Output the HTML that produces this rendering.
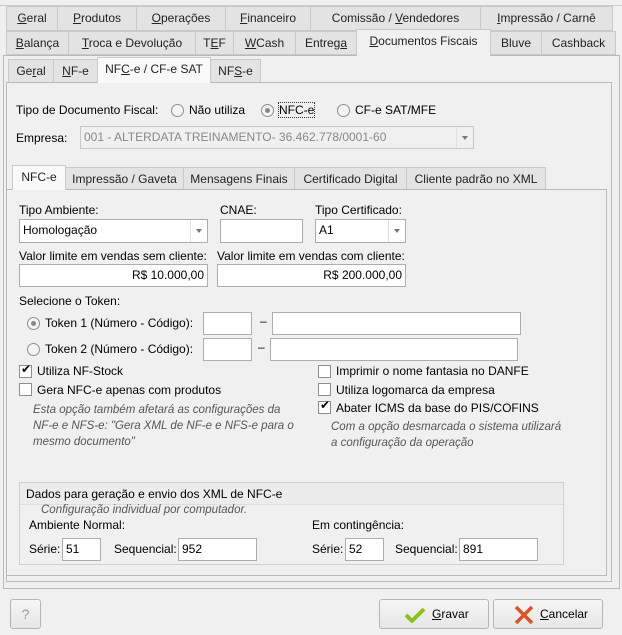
<!DOCTYPE html>
<html><head><meta charset="utf-8"><style>
*{box-sizing:border-box;margin:0;padding:0}
body{width:622px;height:635px;background:#f0f0f0;font-family:"Liberation Sans",sans-serif;font-size:12px;color:#000;position:relative;overflow:hidden}
.a{position:absolute;white-space:nowrap}
.tab{position:absolute;background:#e3e3e3;border:1px solid #c9c9c9;text-align:center;line-height:22px;color:#222}
.sel{background:#f9f9f9;border-bottom:none;z-index:3}
.box{position:absolute;border:1px solid #b9b9b9}
.in{position:absolute;background:#fff;border:1px solid #adadad;line-height:20px;padding:0 3px}
.dd{position:absolute;right:0;top:0;bottom:0;width:17px;border-left:1px solid #e0e0e0}
.dd:after{content:"";position:absolute;left:5px;top:9px;border:3px solid transparent;border-top:4px solid #777}
.rad{position:absolute;width:13px;height:13px;border:1px solid #8e8e8e;border-radius:50%;background:#f4f4f4}
.rad.on:after{content:"";position:absolute;left:3px;top:3px;width:5px;height:5px;border-radius:50%;background:#888}
.chk{position:absolute;width:13px;height:13px;border:1px solid #8e8e8e;background:#fff}
.it{font-style:italic;color:#555}
u{text-decoration:underline}
.btn{position:absolute;border:1px solid #b5b5b5;border-radius:3px;background:linear-gradient(#f6f6f6,#e6e6e6)}
</style></head><body>
<div class="a" style="left:0;top:0;width:622px;height:6px;border-bottom:1px solid #ccc"></div>
<!-- row1 -->
<div class="tab" style="left:6px;top:6px;width:52px;height:25px"><u>G</u>eral</div>
<div class="tab" style="left:57px;top:6px;width:80px;height:25px"><u>P</u>rodutos</div>
<div class="tab" style="left:136px;top:6px;width:90px;height:25px"><u>O</u>perações</div>
<div class="tab" style="left:225px;top:6px;width:86px;height:25px"><u>F</u>inanceiro</div>
<div class="tab" style="left:310px;top:6px;width:171px;height:25px">Comissão / <u>V</u>endedores</div>
<div class="tab" style="left:480px;top:6px;width:133px;height:25px"><u>I</u>mpressão / Carnê</div>
<!-- row2 -->
<div class="tab" style="left:6px;top:31px;width:63px;height:24px"><u>B</u>alança</div>
<div class="tab" style="left:68px;top:31px;width:128px;height:24px"><u>T</u>roca e Devolução</div>
<div class="tab" style="left:195px;top:31px;width:39px;height:24px">T<u>E</u>F</div>
<div class="tab" style="left:233px;top:31px;width:63px;height:24px"><u>W</u>Cash</div>
<div class="tab" style="left:295px;top:31px;width:62px;height:24px">Entreg<u>a</u></div>
<div class="tab sel" style="left:356px;top:29px;width:135px;height:27px;background:#f0f0f0"><u>D</u>ocumentos Fiscais</div>
<div class="tab" style="left:490px;top:31px;width:52px;height:24px">Bluve</div>
<div class="tab" style="left:541px;top:31px;width:75px;height:24px">Cashback</div>
<div class="box" style="left:3px;top:55px;width:617px;height:534px"></div>
<!-- subtabs -->
<div class="tab" style="left:8px;top:59px;width:46px;height:24px">Ge<u>r</u>al</div>
<div class="tab" style="left:53px;top:59px;width:45px;height:24px"><u>N</u>F-e</div>
<div class="tab sel" style="left:97px;top:57px;width:114px;height:26px">NF<u>C</u>-e / CF-e SAT</div>
<div class="tab" style="left:210px;top:59px;width:51px;height:24px">NF<u>S</u>-e</div>
<div class="box" style="left:6px;top:82px;width:606px;height:500px"></div>
<div class="a" style="left:16px;top:103px">Tipo de Documento Fiscal:</div>
<div class="rad" style="left:171px;top:104px"></div><div class="a" style="left:189px;top:103px">Não utiliza</div>
<div class="rad on" style="left:261px;top:104px"></div><div class="a" style="left:279px;top:103px;outline:1px dotted #333">NFC-e</div>
<div class="rad" style="left:337px;top:104px"></div><div class="a" style="left:355px;top:103px">CF-e SAT/MFE</div>
<div class="a" style="left:16px;top:131px">Empresa:</div>
<div class="in" style="left:80px;top:126px;width:394px;height:23px;background:#f0f0f0;border-color:#c8c8c8;color:#888;line-height:21px">001 - ALTERDATA TREINAMENTO- 36.462.778/0001-60<div class="dd"></div></div>
<!-- inner tabs -->
<div class="tab sel" style="left:12px;top:165px;width:54px;height:25px">NFC-e</div>
<div class="tab" style="left:65px;top:167px;width:119px;height:23px">Impressão / Gaveta</div>
<div class="tab" style="left:183px;top:167px;width:112px;height:23px">Mensagens Finais</div>
<div class="tab" style="left:294px;top:167px;width:113px;height:23px">Certificado Digital</div>
<div class="tab" style="left:406px;top:167px;width:140px;height:23px">Cliente padrão no XML</div>
<div class="box" style="left:6px;top:189px;width:601px;height:387px"></div>
<div class="a" style="left:19px;top:203px">Tipo Ambiente:</div>
<div class="in" style="left:19px;top:219px;width:189px;height:24px">Homologação<div class="dd"></div></div>
<div class="a" style="left:220px;top:203px">CNAE:</div>
<div class="in" style="left:220px;top:219px;width:83px;height:24px"></div>
<div class="a" style="left:315px;top:203px">Tipo Certificado:</div>
<div class="in" style="left:315px;top:219px;width:91px;height:24px">A1<div class="dd"></div></div>
<div class="a" style="left:19px;top:249px">Valor limite em vendas sem cliente:</div>
<div class="in" style="left:19px;top:264px;width:189px;height:23px;text-align:right">R$ 10.000,00</div>
<div class="a" style="left:217px;top:249px">Valor limite em vendas com cliente:</div>
<div class="in" style="left:217px;top:264px;width:189px;height:23px;text-align:right">R$ 200.000,00</div>
<div class="a" style="left:19px;top:294px">Selecione o Token:</div>
<div class="rad on" style="left:27px;top:317px"></div><div class="a" style="left:45px;top:316px">Token 1 (Número - Código):</div>
<div class="in" style="left:203px;top:312px;width:49px;height:23px"></div><div class="a" style="left:260px;top:314px">–</div>
<div class="in" style="left:272px;top:312px;width:249px;height:23px"></div>
<div class="rad" style="left:27px;top:343px"></div><div class="a" style="left:45px;top:342px">Token 2 (Número - Código):</div>
<div class="in" style="left:203px;top:338px;width:49px;height:23px"></div><div class="a" style="left:258px;top:340px">–</div>
<div class="in" style="left:270px;top:338px;width:248px;height:23px"></div>
<div class="chk" style="left:19px;top:365px"></div><div class="a" style="left:21px;top:362px;font-size:12px">✔</div><div class="a" style="left:37px;top:364px">Utiliza NF-Stock</div>
<div class="chk" style="left:19px;top:383px"></div><div class="a" style="left:37px;top:383px">Gera NFC-e apenas com produtos</div>
<div class="a it" style="left:33px;top:402px;line-height:16px;font-size:11.5px">Esta opção também afetará as configurações da<br>NF-e e NFS-e: "Gera XML de NF-e e NFS-e para o<br>mesmo documento"</div>
<div class="chk" style="left:318px;top:365px"></div><div class="a" style="left:336px;top:364px">Imprimir o nome fantasia no DANFE</div>
<div class="chk" style="left:318px;top:383px"></div><div class="a" style="left:336px;top:383px">Utiliza logomarca da empresa</div>
<div class="chk" style="left:318px;top:401px"></div><div class="a" style="left:320px;top:398px">✔</div><div class="a" style="left:336px;top:401px">Abater ICMS da base do PIS/COFINS</div>
<div class="a it" style="left:331px;top:419px;line-height:16px;font-size:11.5px">Com a opção desmarcada o sistema utilizará<br>a configuração da operação</div>
<!-- group -->
<div class="box" style="left:19px;top:482px;width:545px;height:83px;border-color:#d0d0d0"></div>
<div class="a" style="left:20px;top:483px;width:543px;height:22px;border-bottom:1px solid #ddd;background:#ececec"></div>
<div class="a" style="left:26px;top:487px">Dados para geração e envio dos XML de NFC-e</div>
<div class="a it" style="left:41px;top:504px;font-size:11.5px">Configuração individual por computador.</div>
<div class="a" style="left:29px;top:518px">Ambiente Normal:</div>
<div class="a" style="left:312px;top:518px">Em contingência:</div>
<div class="a" style="left:29px;top:542px">Série:</div><div class="in" style="left:62px;top:538px;width:39px;height:23px">51</div>
<div class="a" style="left:114px;top:542px">Sequencial:</div><div class="in" style="left:178px;top:538px;width:79px;height:23px">952</div>
<div class="a" style="left:312px;top:542px">Série:</div><div class="in" style="left:345px;top:538px;width:39px;height:23px">52</div>
<div class="a" style="left:395px;top:542px">Sequencial:</div><div class="in" style="left:459px;top:538px;width:79px;height:23px">891</div>
<!-- buttons -->
<div class="btn" style="left:10px;top:599px;width:31px;height:30px;text-align:center;line-height:28px;color:#999;font-size:14px">?</div>
<div class="btn" style="left:379px;top:599px;width:110px;height:30px"><svg class="a" style="left:24px;top:6px" width="22" height="18" viewBox="0 0 22 18"><path d="M2 9 L8 15 L20 3" stroke="#8cbf1a" stroke-width="4" fill="none" stroke-linejoin="round"/></svg><div class="a" style="left:52px;top:7px"><u>G</u>ravar</div></div>
<div class="btn" style="left:493px;top:599px;width:110px;height:30px"><svg class="a" style="left:20px;top:5px" width="20" height="20" viewBox="0 0 20 20"><path d="M2 2 L18 18 M18 2 L2 18" stroke="#d9542a" stroke-width="3.5"/></svg><div class="a" style="left:46px;top:7px"><u>C</u>ancelar</div></div>
</body></html>
